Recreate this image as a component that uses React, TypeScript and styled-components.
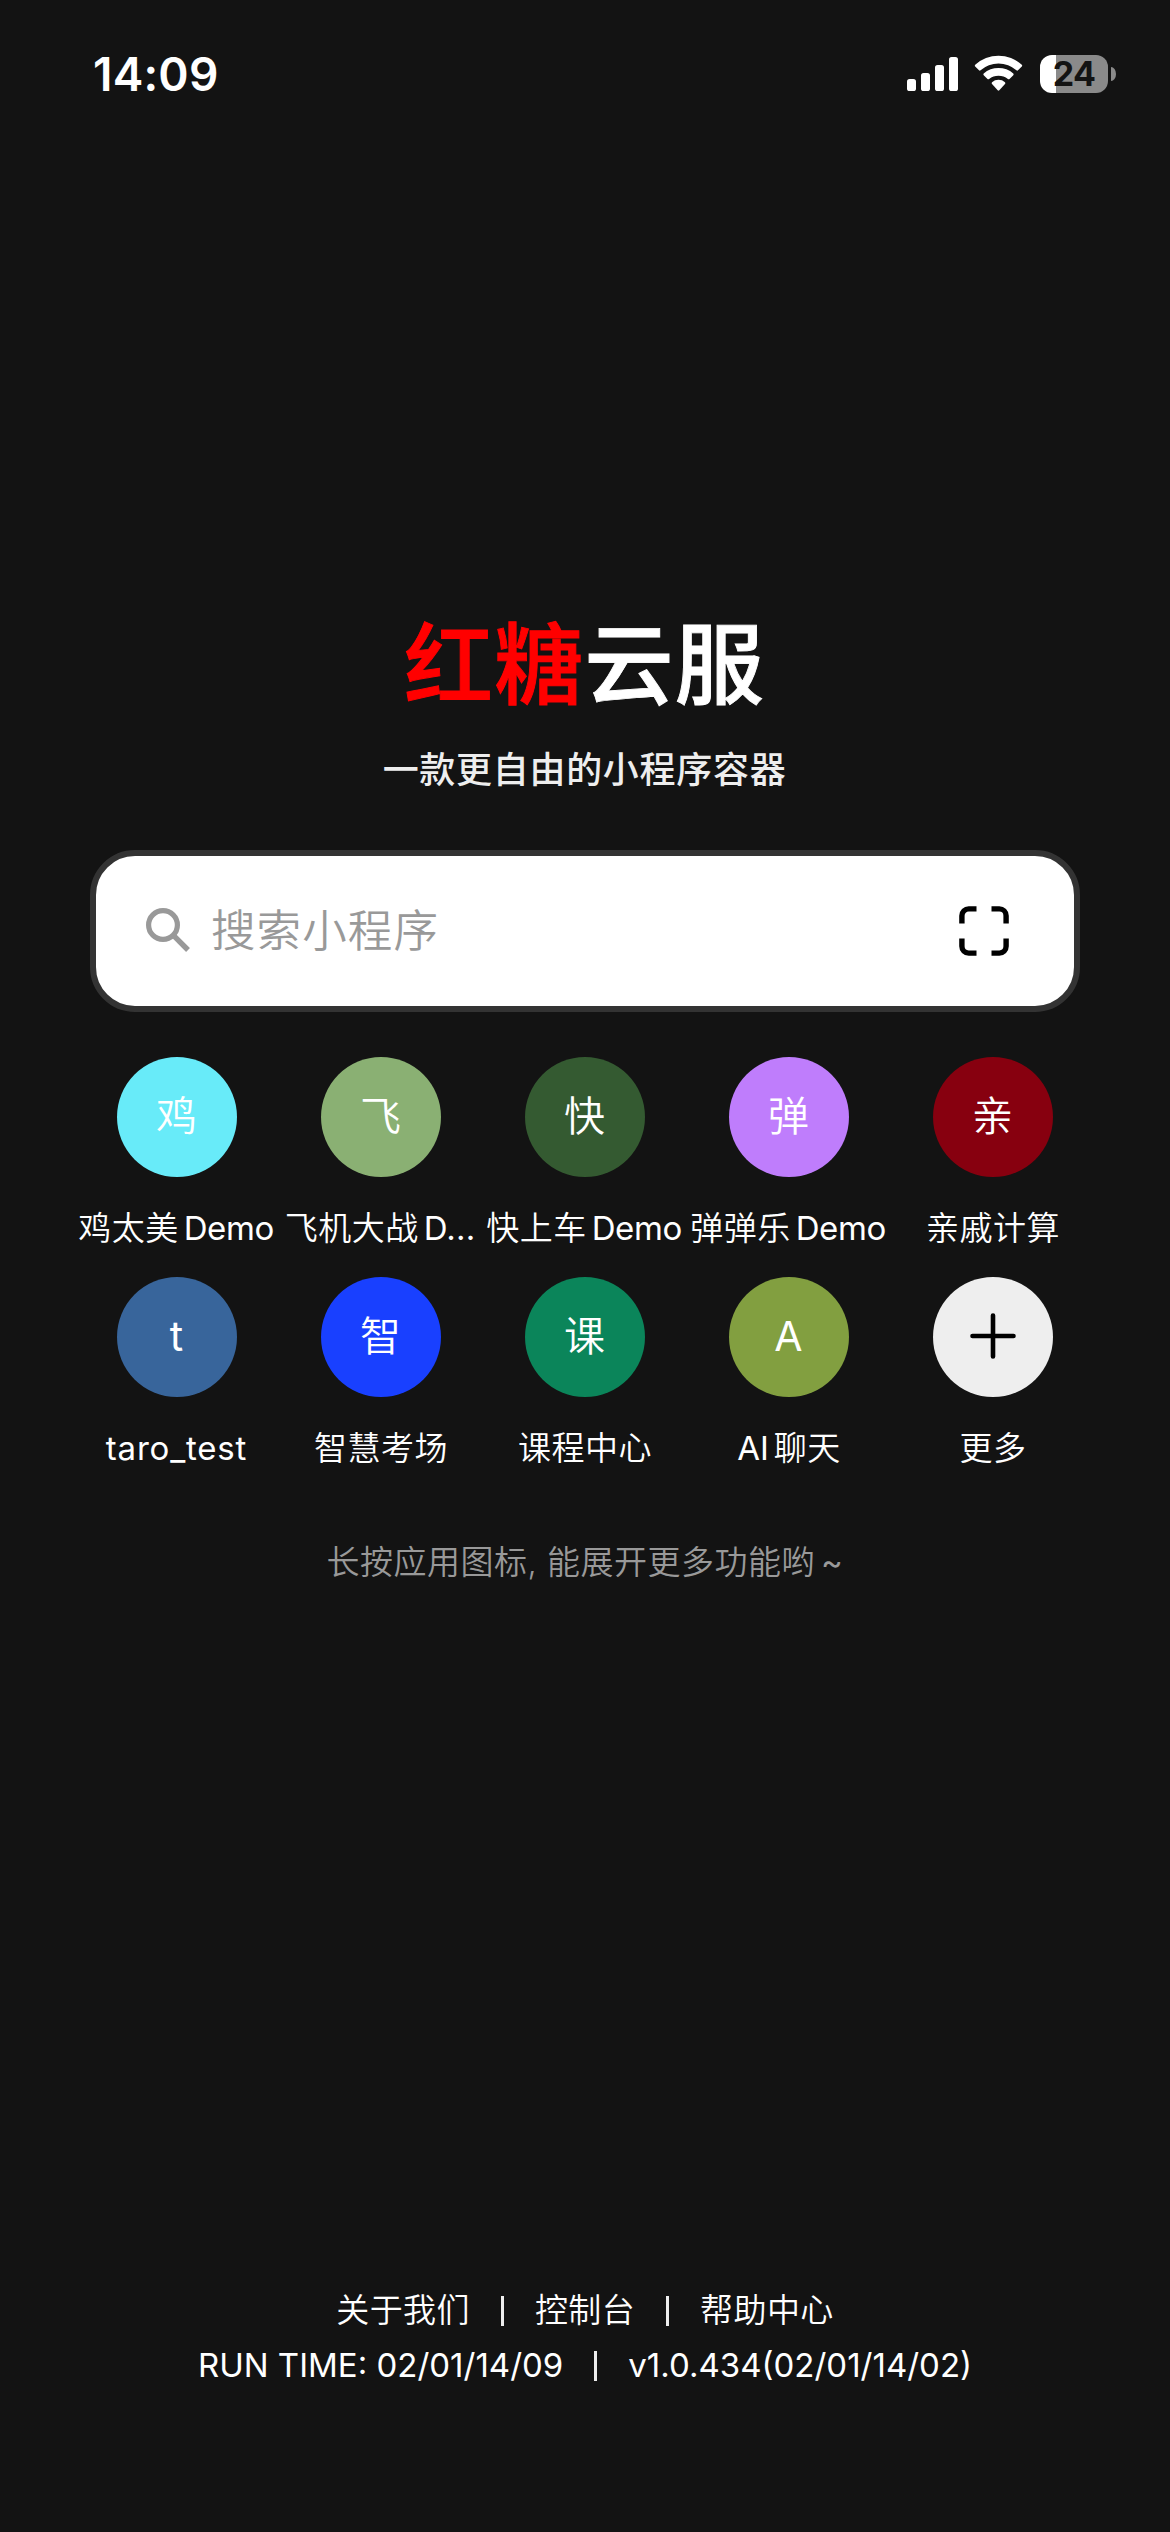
import React from "react";
import styled, { createGlobalStyle } from "styled-components";

const GlobalStyle = createGlobalStyle`
  * { box-sizing: border-box; }
  body {
    margin: 0;
    background: #131313;
    color: #fff;
    font-family: Inter, "Noto Sans CJK SC", sans-serif;
    text-autospace: no-autospace;
  }
`;

const Screen = styled.div`
  width: 1170px;
  height: 2532px;
  display: flex;
  flex-direction: column;
  background: #131313;
  overflow: hidden;
`;

const StatusBar = styled.header`
  height: 150px;
  padding: 55px 54px 0 93px;
  display: flex;
  justify-content: space-between;
  align-items: flex-start;
`;

const Clock = styled.time`
  font-size: 46px;
  font-weight: 600;
  line-height: 38px;
  letter-spacing: 0.2px;
`;

const StatusIcons = styled.div`
  display: flex;
  align-items: flex-start;
`;

const SignalIcon = styled.svg`
  margin-right: 15px;
`;

const WifiIcon = styled.svg`
  margin-right: 16px;
`;

const Battery = styled.div`
  width: 68px;
  height: 38px;
  border-radius: 12px;
  background: linear-gradient(to right, #fff 16px, #8a8a8a 16px);
  color: #131313;
  font-size: 34px;
  font-weight: 700;
  line-height: 38px;
  text-align: center;
  letter-spacing: -0.6px;
`;

const BatteryTip = styled.span`
  width: 5px;
  height: 14px;
  margin: 12px 0 0 3px;
  border-radius: 0 5px 5px 0 / 0 7px 7px 0;
  background: #8a8a8a;
`;

const Brand = styled.section`
  margin-top: 450px;
  display: flex;
  flex-direction: column;
  align-items: center;
`;

const Title = styled.h1`
  margin: 0;
  padding-right: 1px;
  font-size: 89px;
  font-weight: 500;
  line-height: 130px;
  letter-spacing: 1.2px;
  -webkit-text-stroke: 0.9px currentColor;
`;

const TitleAccent = styled.span`
  color: #f00;
`;

const Slogan = styled.p`
  margin: 15px 0 0;
  padding-right: 1px;
  color: #eee;
  font-size: 36px;
  font-weight: 500;
  line-height: 50px;
  letter-spacing: 0.7px;
`;

const SearchBox = styled.div`
  height: 162px;
  margin: 55px 90px 0;
  padding: 0 65px 0 50px;
  display: flex;
  align-items: center;
  border: 6px solid #333;
  border-radius: 45px;
  background: #fff;
`;

const Placeholder = styled.span`
  flex: 1;
  margin-left: 21px;
  color: #999;
  font-size: 44.5px;
  font-weight: 350;
  line-height: 60px;
  letter-spacing: 1.1px;
`;

const AppGrid = styled.main`
  margin: 45px 75px 0;
  display: grid;
  grid-template-columns: repeat(5, 204px);
  grid-auto-rows: 220px;
`;

const AppItem = styled.div`
  display: flex;
  flex-direction: column;
  align-items: center;
`;

const AppIcon = styled.div<{ $color: string }>`
  width: 120px;
  height: 120px;
  padding: 0 1px 2px 0;
  display: flex;
  align-items: center;
  justify-content: center;
  border-radius: 50%;
  background: ${(p) => p.$color};
  font-size: 41px;
  font-weight: 350;
  line-height: 60px;
`;

const AppLabel = styled.span`
  margin-top: 27px;
  font-size: 33px;
  font-weight: 350;
  line-height: 48px;
  letter-spacing: 0.5px;
  white-space: nowrap;
`;

const Latin = styled.span<{ $before?: number; $after?: number; $spacing?: number }>`
  margin-left: ${(p) => p.$before ?? 0}px;
  margin-right: ${(p) => p.$after ?? 0}px;
  font-weight: 400;
  letter-spacing: ${(p) => p.$spacing ?? 0.6}px;
`;

const Hint = styled.p`
  margin: 40px 0 0;
  color: #999;
  font-size: 33px;
  font-weight: 350;
  line-height: 50px;
  letter-spacing: 0.5px;
  text-align: center;
`;

const Footer = styled.footer`
  margin-top: auto;
  padding-bottom: 139px;
  display: flex;
  flex-direction: column;
  align-items: center;
`;

const FooterRow = styled.div<{ $spacing: number; $weight: number }>`
  height: 55px;
  display: flex;
  align-items: center;
  font-size: 33px;
  font-weight: ${(p) => p.$weight};
  line-height: 55px;
  letter-spacing: ${(p) => p.$spacing}px;
  white-space: nowrap;
`;

const Divider = styled.i`
  width: 3px;
  height: 30px;
  margin: 0 31px;
  background: #eee;
`;

type App = { icon: React.ReactNode; color: string; label: React.ReactNode };

const PlusIcon = () => (
  <svg width="46" height="46" viewBox="0 0 46 46" stroke="#000" strokeWidth="4.6" strokeLinecap="round">
    <path d="M23 2.5v41M2.5 23h41" />
  </svg>
);

const apps: App[] = [
  { icon: "鸡", color: "#68ebf9", label: <>鸡太美<Latin $before={5} $after={2} $spacing={-0.4}>Demo</Latin></> },
  { icon: "飞", color: "#8ab073", label: <>飞机大战<Latin $before={5} $after={2} $spacing={0.2}>D...</Latin></> },
  { icon: "快", color: "#345a31", label: <>快上车<Latin $before={5} $after={2} $spacing={-0.4}>Demo</Latin></> },
  { icon: "弹", color: "#bf7dfc", label: <>弹弹乐<Latin $before={5} $after={2} $spacing={-0.4}>Demo</Latin></> },
  { icon: "亲", color: "#87000f", label: "亲戚计算" },
  { icon: <Latin $spacing={0}>t</Latin>, color: "#38659b", label: <Latin $after={1} $spacing={0.8}>taro_test</Latin> },
  { icon: "智", color: "#1940ff", label: "智慧考场" },
  { icon: "课", color: "#0b855a", label: "课程中心" },
  { icon: <Latin $spacing={0}>A</Latin>, color: "#829f40", label: <><Latin $after={5} $spacing={0}>AI</Latin>聊天</> },
  { icon: <PlusIcon />, color: "#eee", label: "更多" },
];

export default function App() {
  return (
    <>
      <GlobalStyle />
      <Screen>
        <StatusBar>
          <Clock>14:09</Clock>
          <StatusIcons>
            <SignalIcon width="52" height="38" viewBox="0 0 52 38" fill="#fff">
              <rect x="0" y="24" width="9" height="12" rx="2.6" />
              <rect x="14" y="18" width="9" height="18" rx="2.6" />
              <rect x="28" y="10" width="9" height="26" rx="2.6" />
              <rect x="42" y="2" width="9" height="34" rx="2.6" />
            </SignalIcon>
            <WifiIcon width="50" height="38" viewBox="0 0 50 38" fill="#fff">
              <path d="M1.2 9.8Q.4 10.7 1.2 11.5L5 15.3Q5.8 16 6.6 15.2A27 27 0 0 1 42.4 15.2Q43.2 16 44 15.3L47.8 11.5Q48.6 10.7 47.8 9.8A34.5 34.5 0 0 0 1.2 9.8Z" />
              <path d="M9.7 18.6Q8.9 19.4 9.7 20.2L13.5 24Q14.3 24.7 15.1 24A15 15 0 0 1 33.9 24Q34.7 24.7 35.5 24L39.3 20.2Q40.1 19.4 39.3 18.6A22 22 0 0 0 9.7 18.6Z" />
              <path d="M18 27.2Q17.2 28.1 18 29L23.7 35.3Q24.5 36.1 25.3 35.3L31 29Q31.8 28.1 31 27.2A10 10 0 0 0 18 27.2Z" />
            </WifiIcon>
            <Battery>24</Battery>
            <BatteryTip />
          </StatusIcons>
        </StatusBar>

        <Brand>
          <Title>
            <TitleAccent>红糖</TitleAccent>云服
          </Title>
          <Slogan>一款更自由的小程序容器</Slogan>
        </Brand>

        <SearchBox>
          <svg width="44" height="46" viewBox="0 0 44 46" fill="none" stroke="#999" strokeWidth="5.2">
            <circle cx="17" cy="17" r="14.4" />
            <path d="M27.2 27.2L42 42" strokeWidth="5.4" />
          </svg>
          <Placeholder>搜索小程序</Placeholder>
          <svg width="50" height="50" viewBox="0 0 50 50" fill="none" stroke="#000" strokeWidth="5.4">
            <path d="M2.9 17.5V9.7A6.8 6.8 0 0 1 9.7 2.9H17.5M32.5 2.9H40.3A6.8 6.8 0 0 1 47.1 9.7V17.5M47.1 32.5V40.3A6.8 6.8 0 0 1 40.3 47.1H32.5M17.5 47.1H9.7A6.8 6.8 0 0 1 2.9 40.3V32.5" />
          </svg>
        </SearchBox>

        <AppGrid>
          {apps.map((app, i) => (
            <AppItem key={i}>
              <AppIcon $color={app.color}>{app.icon}</AppIcon>
              <AppLabel>{app.label}</AppLabel>
            </AppItem>
          ))}
        </AppGrid>

        <Hint>
          长按应用图标, 能展开更多功能哟<Latin $before={6}>~</Latin>
        </Hint>

        <Footer>
          <FooterRow $spacing={0.4} $weight={350}>
            <span>关于我们</span>
            <Divider />
            <span>控制台</span>
            <Divider />
            <span>帮助中心</span>
          </FooterRow>
          <FooterRow $spacing={0} $weight={400}>
            <span>RUN TIME: 02/01/14/09</span>
            <Divider />
            <span>v1.0.434(02/01/14/02)</span>
          </FooterRow>
        </Footer>
      </Screen>
    </>
  );
}
